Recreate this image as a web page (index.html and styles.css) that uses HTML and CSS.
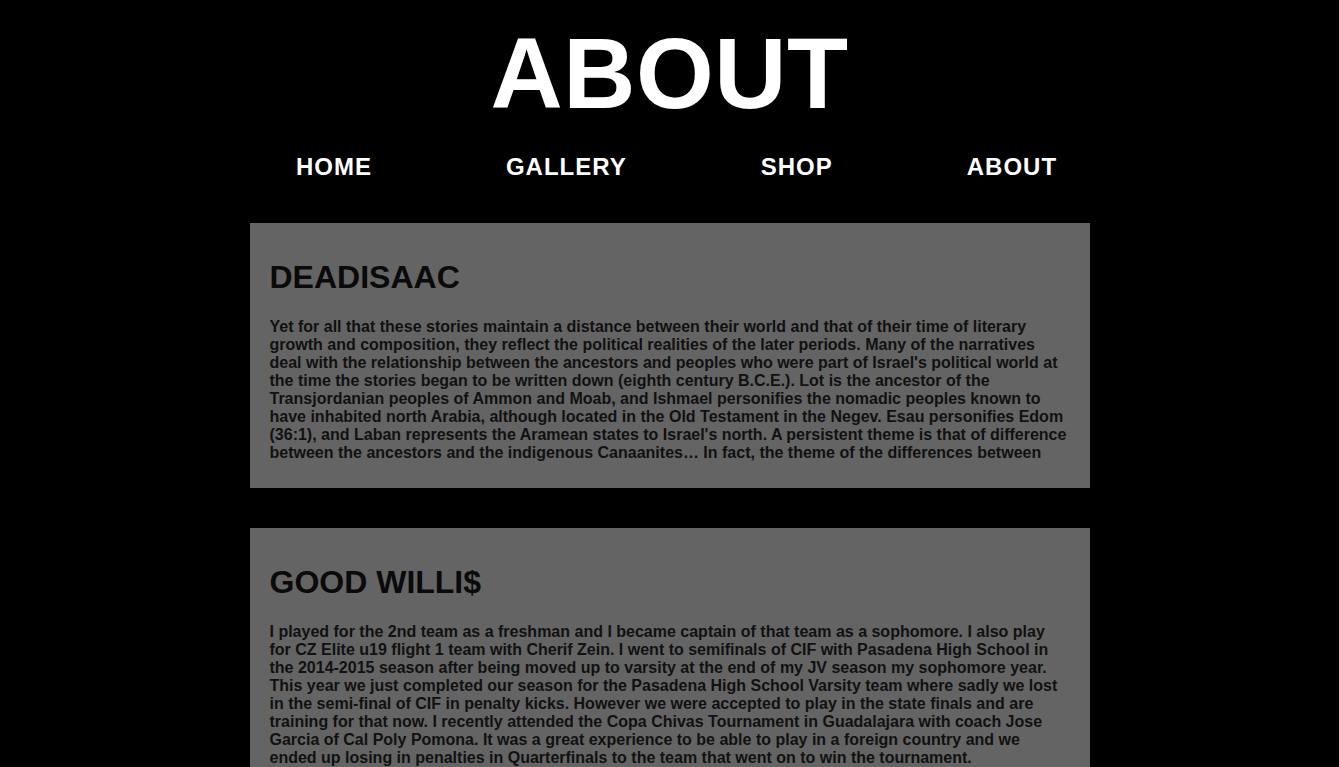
FILE: index.html
```html
<!DOCTYPE html>
<html lang="en">
<head>
<meta charset="utf-8">
<title>About</title>
<link rel="stylesheet" href="styles.css">
</head>
<body>
<header class="site-header">
  <h1 class="page-title">ABOUT</h1>
  <nav class="main-nav">
    <a class="nav-link" href="#">HOME</a>
    <a class="nav-link" href="#">GALLERY</a>
    <a class="nav-link" href="#">SHOP</a>
    <a class="nav-link" href="#">ABOUT</a>
  </nav>
</header>
<main class="content">
  <section class="card">
    <h2 class="card-title">DEADISAAC</h2>
    <p class="card-text">Yet for all that these stories maintain a distance between their world and that of their time of literary growth and composition, they reflect the political realities of the later periods. Many of the narratives deal with the relationship between the ancestors and peoples who were part of Israel's political world at the time the stories began to be written down (eighth century B.C.E.). Lot is the ancestor of the Transjordanian peoples of Ammon and Moab, and Ishmael personifies the nomadic peoples known to have inhabited north Arabia, although located in the Old Testament in the Negev. Esau personifies Edom (36:1), and Laban represents the Aramean states to Israel's north. A persistent theme is that of difference between the ancestors and the indigenous Canaanites… In fact, the theme of the differences between</p>
  </section>
  <section class="card">
    <h2 class="card-title">GOOD WILLI$</h2>
    <p class="card-text">I played for the 2nd team as a freshman and I became captain of that team as a sophomore. I also play for CZ Elite u19 flight 1 team with Cherif Zein. I went to semifinals of CIF with Pasadena High School in the 2014-2015 season after being moved up to varsity at the end of my JV season my sophomore year. This year we just completed our season for the Pasadena High School Varsity team where sadly we lost in the semi-final of CIF in penalty kicks. However we were accepted to play in the state finals and are training for that now. I recently attended the Copa Chivas Tournament in Guadalajara with coach Jose Garcia of Cal Poly Pomona. It was a great experience to be able to play in a foreign country and we ended up losing in penalties in Quarterfinals to the team that went on to win the tournament.</p>
  </section>
</main>
</body>
</html>
```
FILE: styles.css
```css
html, body {
  margin: 0;
  padding: 0;
  background: #000;
}

body {
  font-family: "Liberation Sans", Arial, sans-serif;
  color: #fff;
}

.site-header {
  padding-top: 16px;
  text-align: center;
}

.page-title {
  margin: 0;
  font-size: 100px;
  line-height: 115px;
  font-weight: bold;
  color: #fff;
  letter-spacing: 0.5px;
}

.main-nav {
  margin-top: 22px;
  display: flex;
  justify-content: center;
  gap: 134px;
  padding-left: 14px;
}

.nav-link {
  color: #fff;
  text-decoration: none;
  font-size: 24px;
  line-height: 28px;
  font-weight: bold;
  letter-spacing: 1px;
}

.content {
  width: 840px;
  margin: 42px auto 0;
  display: flex;
  flex-direction: column;
  gap: 40px;
}

.card {
  background: #646464;
  padding: 15px 20px 10px;
  color: #111;
}

.card-title {
  margin: 21px 0 22px;
  font-size: 32px;
  line-height: 37px;
  font-weight: bold;
  color: #0a0a0a;
}

.card-text {
  margin: 16px 0;
  font-size: 16px;
  line-height: 18px;
  font-weight: bold;
}
```
